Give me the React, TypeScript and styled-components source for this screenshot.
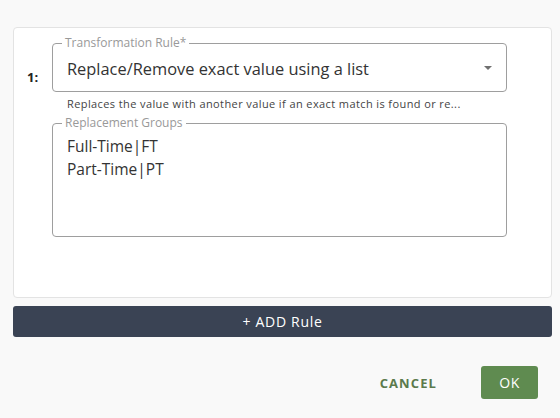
import React from "react";
import styled, { createGlobalStyle } from "styled-components";

const Global = createGlobalStyle`
  html, body { margin: 0; padding: 0; background: #f9f9f9; }
  body { font-family: "Open Sans", "Liberation Sans", sans-serif; color: #333; }
  * { box-sizing: border-box; }
`;

const Page = styled.div`
  width: 560px;
  height: 418px;
  padding: 27px 8px 0 13px;
  display: flex;
  flex-direction: column;
`;

const Card = styled.div`
  height: 271px;
  background: #fff;
  border: 1px solid #e3e3e3;
  border-radius: 4px;
  padding: 9px 44px 0 13px;
  display: flex;
  align-items: flex-start;
`;

const Index = styled.div`
  width: 25px;
  margin-top: 31px;
  font-size: 13px;
  font-weight: 700;
  color: #222;
`;

const Fields = styled.div`
  flex: 1;
  display: flex;
  flex-direction: column;
`;

const Outlined = styled.fieldset<{ $h: number }>`
  margin: 0;
  height: ${(p) => p.$h}px;
  border: 1px solid #9e9e9e;
  border-radius: 4px;
  padding: 0 14px;
`;

const Legend = styled.legend`
  font-size: 12px;
  line-height: 12px;
  color: #999;
  padding: 0 3px;
  margin-left: -5px;
`;

const SelectRow = styled.div`
  display: flex;
  align-items: center;
  justify-content: space-between;
  height: 38px;
  font-size: 16.4px;
  color: #333;
`;

const Caret = styled.span`
  width: 0;
  height: 0;
  border-left: 4.5px solid transparent;
  border-right: 4.5px solid transparent;
  border-top: 4.5px solid #707070;
`;

const Helper = styled.div`
  font-size: 11px;
  letter-spacing: 0.4px;
  color: #444;
  padding: 4px 0 0 15px;
  height: 25px;
  white-space: nowrap;
`;

const TextLines = styled.div`
  font-size: 15.5px;
  line-height: 23px;
  padding-top: 6px;
  color: #333;
`;

const AddButton = styled.button`
  margin-top: 8px;
  height: 31px;
  width: 100%;
  border: none;
  border-radius: 3px;
  background: #3a4354;
  color: #fff;
  font-family: inherit;
  font-size: 14px;
  letter-spacing: 0.7px;
`;

const Footer = styled.div`
  display: flex;
  justify-content: flex-end;
  align-items: center;
  gap: 44px;
  margin-top: 29px;
  padding-right: 14px;
`;

const TextButton = styled.button`
  border: none;
  background: none;
  color: #5b7a4c;
  font-family: inherit;
  font-weight: 700;
  font-size: 13px;
  letter-spacing: 1.1px;
  padding: 0;
`;

const OkButton = styled.button`
  width: 57px;
  height: 33px;
  border: none;
  border-radius: 3px;
  background: #5f8b50;
  color: #fff;
  font-family: inherit;
  font-size: 14px;
  letter-spacing: 0.5px;
`;

export default function App() {
  return (
    <>
      <Global />
      <Page>
        <Card>
          <Index>1:</Index>
          <Fields>
            <Outlined $h={55}>
              <Legend>Transformation Rule*</Legend>
              <SelectRow>
                <span>Replace/Remove exact value using a list</span>
                <Caret />
              </SelectRow>
            </Outlined>
            <Helper>Replaces the value with another value if an exact match is found or re...</Helper>
            <Outlined $h={120}>
              <Legend>Replacement Groups</Legend>
              <TextLines>
                Full-Time|FT
                <br />
                Part-Time|PT
              </TextLines>
            </Outlined>
          </Fields>
        </Card>
        <AddButton>+ ADD Rule</AddButton>
        <Footer>
          <TextButton>CANCEL</TextButton>
          <OkButton>OK</OkButton>
        </Footer>
      </Page>
    </>
  );
}
